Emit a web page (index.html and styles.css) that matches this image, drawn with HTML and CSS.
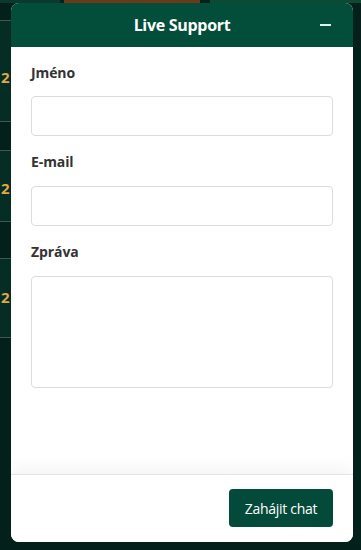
FILE: index.html
```html
<!DOCTYPE html>
<html lang="cs">
<head>
<meta charset="utf-8">
<link rel="stylesheet" href="styles.css">
</head>
<body>
<div class="backdrop">
  <div class="bg-top-left"></div>
  <div class="bg-top-mid"></div>
  <div class="bg-top-right"></div>
  <div class="bg-row r1"><span class="num">2</span></div>
  <div class="bg-row r2"><span class="num">2</span></div>
  <div class="bg-row r3"><span class="num">2</span></div>
</div>
<div class="panel">
  <div class="header">
    <span class="title">Live Support</span>
    <button class="minimize" aria-label="Minimize"><span class="bar"></span></button>
  </div>
  <form class="body">
    <div class="field">
      <label class="label">Jméno</label>
      <input class="input" type="text">
    </div>
    <div class="field">
      <label class="label">E-mail</label>
      <input class="input" type="email">
    </div>
    <div class="field">
      <label class="label">Zpráva</label>
      <textarea class="textarea"></textarea>
    </div>
  </form>
  <div class="footer">
    <button class="start" type="button">Zahájit chat</button>
  </div>
</div>
</body>
</html>
```
FILE: styles.css
```css
* { box-sizing: border-box; }
html, body { margin: 0; padding: 0; }
body {
  width: 361px;
  height: 550px;
  overflow: hidden;
  background: #03201a;
  font-family: "Open Sans", "Noto Sans", sans-serif;
  position: relative;
  padding: 3px 8px 8px 11px;
}
.backdrop { position: absolute; inset: 0; z-index: 0; }
.bg-top-left { position: absolute; left: 0; top: 0; width: 60px; height: 3px; background: #0a3a2e; }
.bg-top-mid { position: absolute; left: 64px; top: 0; width: 136px; height: 3px; background: #6b3a1a; }
.bg-top-right { position: absolute; left: 210px; top: 0; width: 151px; height: 3px; background: #0d4a33; }
.bg-row {
  position: absolute; left: 0; width: 12px; height: 72px;
  background: #062d24;
  border-top: 1px solid #3a5a52;
  border-bottom: 1px solid #3a5a52;
}
.bg-row.r1 { top: 20px; height: 102px; }
.bg-row.r2 { top: 150px; }
.bg-row.r3 { top: 258px; height: 80px; }
.num {
  position: absolute; left: 1px;
  font: 700 15px "Open Sans", sans-serif;
  color: #e0a943;
}
.r1 .num { top: 46px; }
.r2 .num { top: 27px; }
.r3 .num { top: 28px; }

.panel {
  position: relative;
  z-index: 1;
  width: 342px;
  height: 539px;
  background: #fff;
  border-radius: 8px;
  overflow: hidden;
  display: flex;
  flex-direction: column;
}
.header {
  height: 44px;
  flex: none;
  background: #034d3b;
  display: flex;
  align-items: center;
  justify-content: center;
  position: relative;
}
.title {
  color: #fff;
  font-weight: 700;
  font-size: 16px;
  line-height: 20px;
  letter-spacing: -0.3px;
  margin-top: -1px;
}
.minimize {
  position: absolute;
  right: 20px;
  top: 14px;
  width: 16px;
  height: 16px;
  border: 0;
  padding: 0;
  background: transparent;
  display: flex;
  align-items: center;
  justify-content: center;
}
.minimize .bar { width: 11px; height: 2px; background: #d8f5ea; }
.body {
  flex: 1;
  padding: 16px 20px 0;
  margin: 0;
}
.field { display: flex; flex-direction: column; margin-bottom: 16px; }
.label {
  font-size: 14px;
  font-weight: 700;
  line-height: 20px;
  color: #333;
  margin-bottom: 13px;
  letter-spacing: -0.1px;
}
.field + .field .label { margin-bottom: 14px; }
.input, .textarea {
  width: 302px;
  border: 1px solid #dcdcdc;
  border-radius: 4px;
  background: #fff;
  outline: none;
  font: inherit;
}
.input { height: 40px; }
.textarea { height: 112px; resize: none; }
.footer {
  flex: none;
  height: 68px;
  border-top: 1px solid #e4e4e4;
  box-shadow: 0 -8px 14px rgba(0,0,0,0.04);
  display: flex;
  align-items: center;
  justify-content: flex-end;
  padding: 0 20px 1px;
  background: #fff;
}
.start {
  height: 38px;
  width: 104px;
  border: 0;
  border-radius: 4px;
  background: #034a3a;
  color: #fff;
  font-family: "Open Sans", sans-serif;
  font-size: 14px;
  letter-spacing: -0.3px;
}
```
